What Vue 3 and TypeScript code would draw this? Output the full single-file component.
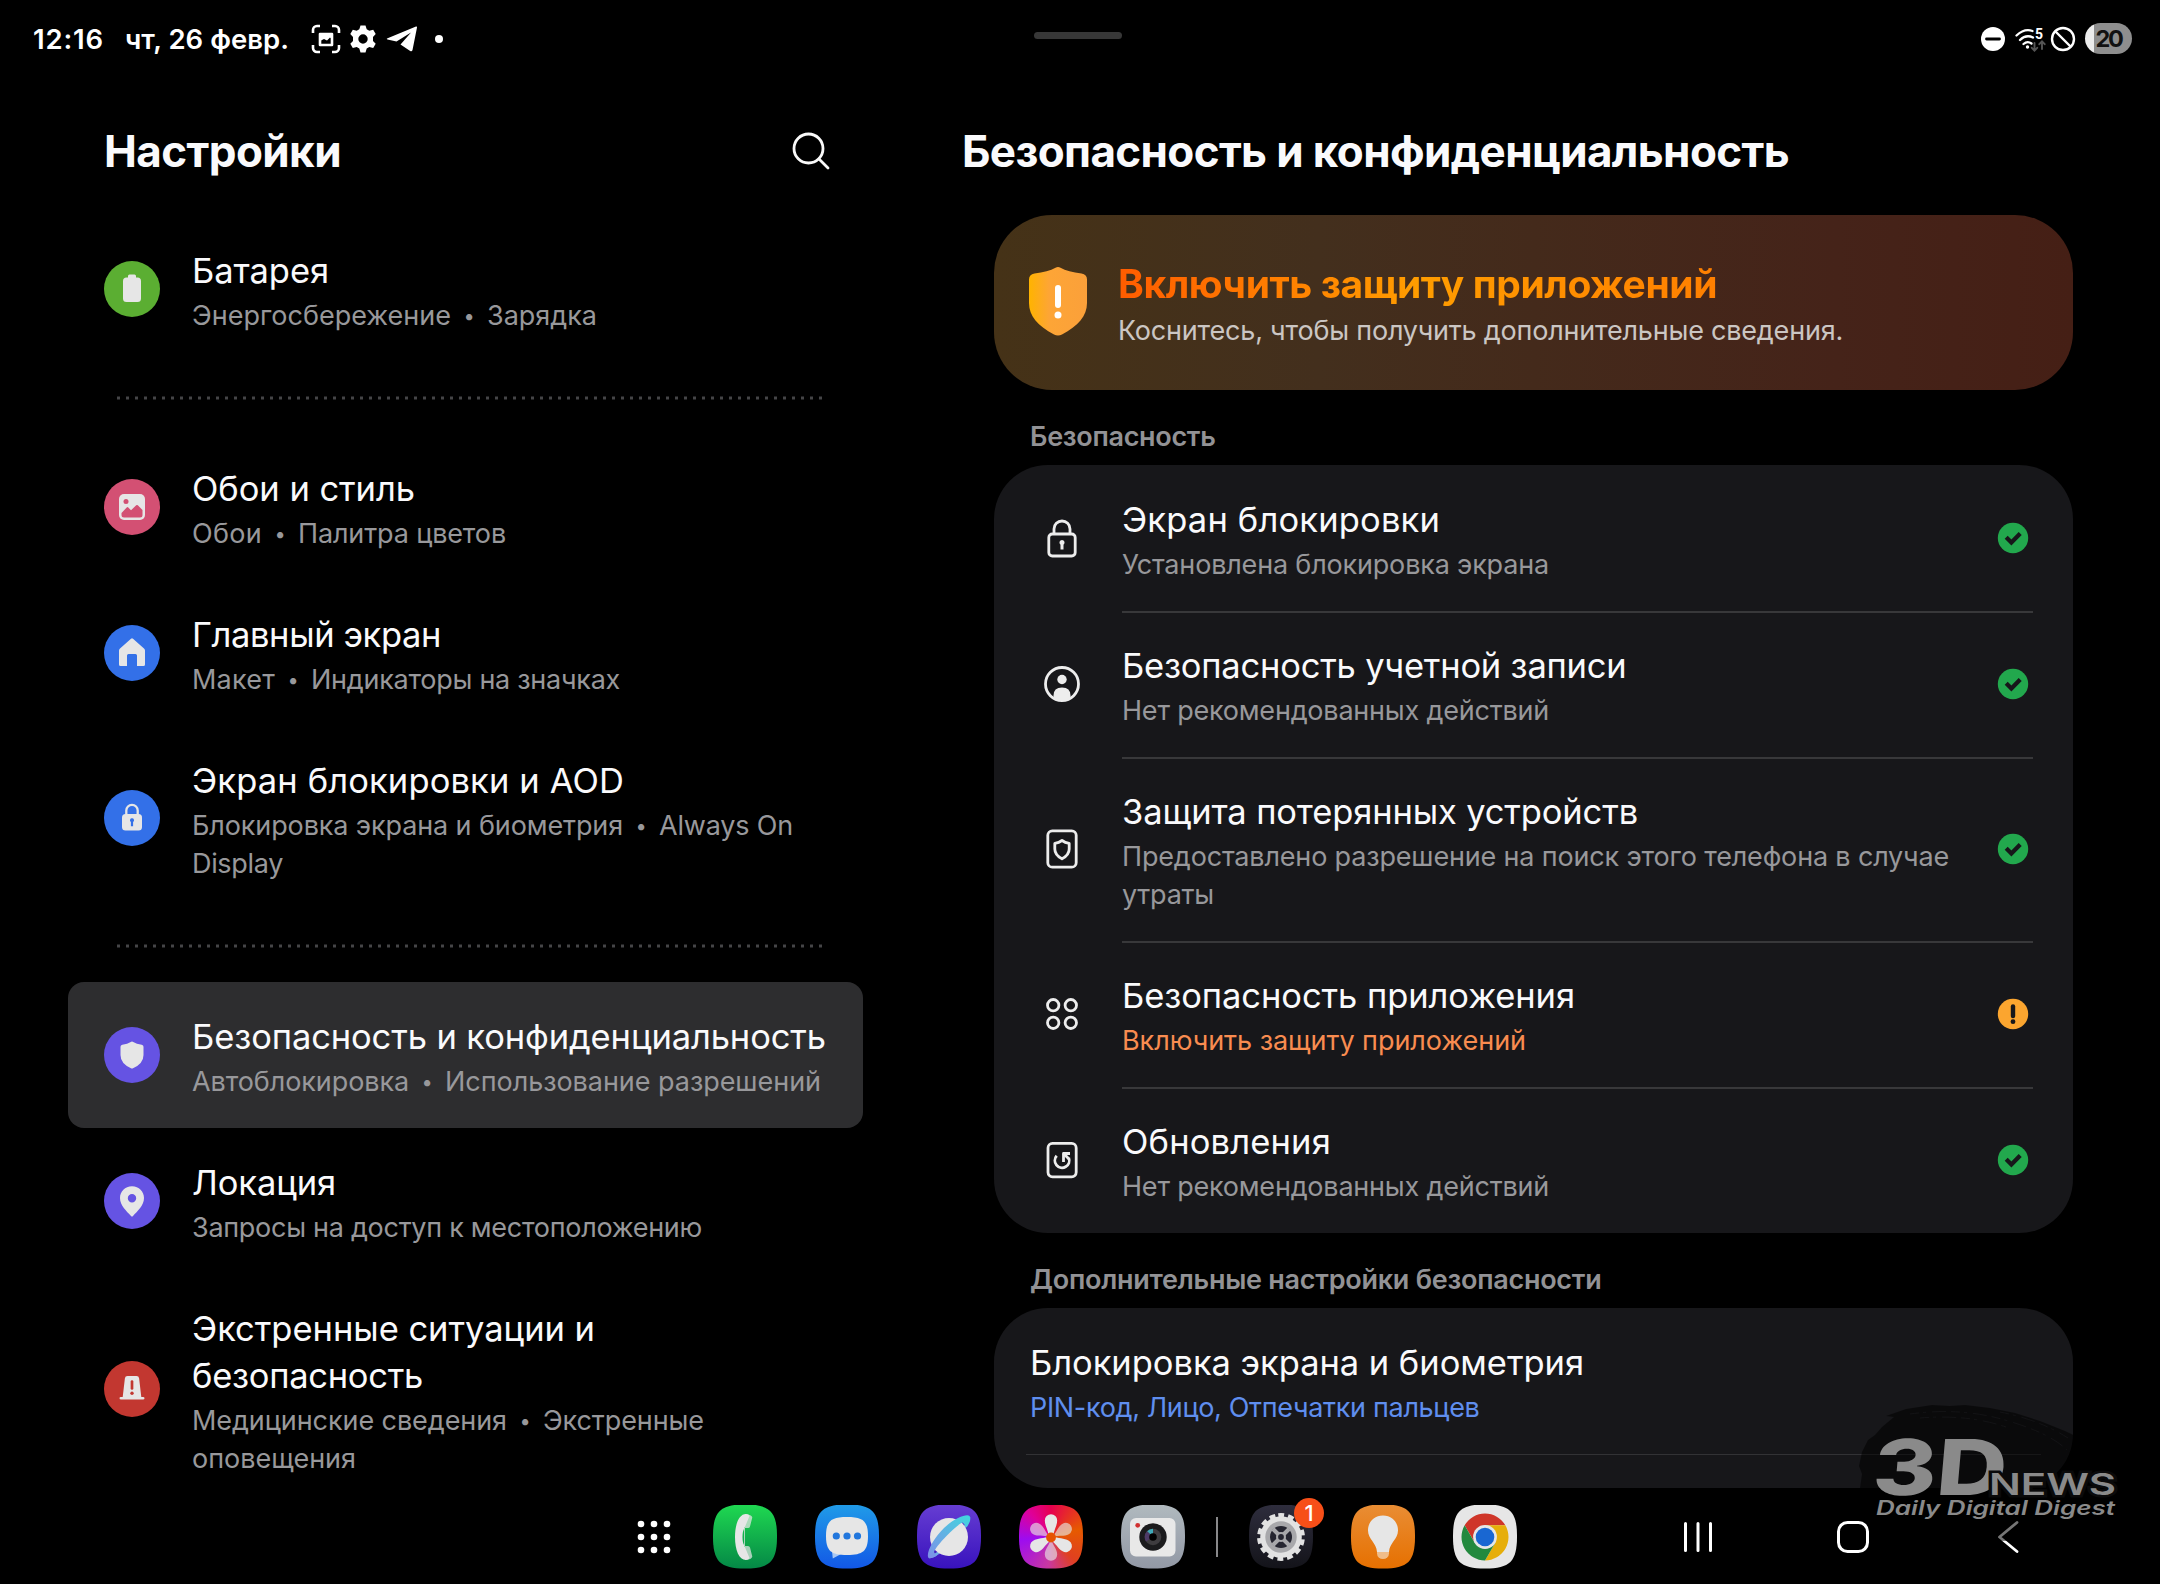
<script setup lang="ts">
import type { Directive } from 'vue'

interface Part { t: string; w: number }
interface MenuItem { icon: string; color: string; title: Part[]; sub: Part[][]; active?: boolean }
interface SecurityRow { icon: string; title: Part; sub: Part[]; warn?: boolean }

// Tracks a run of text so that it takes exactly the given advance width.
const vFit: Directive<HTMLElement, number> = {
  mounted(el, { value }) {
    const natural = el.getBoundingClientRect().width
    const count = (el.textContent ?? '').length
    if (count > 0) el.style.letterSpacing = `${(value - natural) / count}px`
  },
}

const groups: MenuItem[][] = [
  [
    { icon: 'battery', color: '#5bae32', title: [{ t: 'Батарея', w: 137 }], sub: [[{ t: 'Энергосбережение', w: 259 }, { t: 'Зарядка', w: 110 }]] },
  ],
  [
    { icon: 'picture', color: '#d35073', title: [{ t: 'Обои и стиль', w: 223 }], sub: [[{ t: 'Обои', w: 70 }, { t: 'Палитра цветов', w: 208 }]] },
    { icon: 'home', color: '#3370e8', title: [{ t: 'Главный экран', w: 249 }], sub: [[{ t: 'Макет', w: 83 }, { t: 'Индикаторы на значках', w: 309 }]] },
    { icon: 'lock', color: '#3370e8', title: [{ t: 'Экран блокировки и AOD', w: 432 }], sub: [[{ t: 'Блокировка экрана и биометрия', w: 431 }, { t: 'Always On', w: 134 }], [{ t: 'Display', w: 91 }]] },
  ],
  [
    { icon: 'shield', color: '#6553e3', active: true, title: [{ t: 'Безопасность и конфиденциальность', w: 634 }], sub: [[{ t: 'Автоблокировка', w: 217 }, { t: 'Использование разрешений', w: 376 }]] },
    { icon: 'pin', color: '#6553e3', title: [{ t: 'Локация', w: 144 }], sub: [[{ t: 'Запросы на доступ к местоположению', w: 510 }]] },
    { icon: 'siren', color: '#c23730', title: [{ t: 'Экстренные ситуации и', w: 403 }, { t: 'безопасность', w: 231 }], sub: [[{ t: 'Медицинские сведения', w: 315 }, { t: 'Экстренные', w: 161 }], [{ t: 'оповещения', w: 164 }]] },
  ],
]

const rows: SecurityRow[] = [
  { icon: 'lock', title: { t: 'Экран блокировки', w: 318 }, sub: [{ t: 'Установлена блокировка экрана', w: 427 }] },
  { icon: 'person', title: { t: 'Безопасность учетной записи', w: 504.5 }, sub: [{ t: 'Нет рекомендованных действий', w: 427 }] },
  { icon: 'device', title: { t: 'Защита потерянных устройств', w: 516 }, sub: [{ t: 'Предоставлено разрешение на поиск этого телефона в случае', w: 827 }, { t: 'утраты', w: 92 }] },
  { icon: 'apps', title: { t: 'Безопасность приложения', w: 453 }, sub: [{ t: 'Включить защиту приложений', w: 404 }], warn: true },
  { icon: 'update', title: { t: 'Обновления', w: 209 }, sub: [{ t: 'Нет рекомендованных действий', w: 427 }] },
]

const petals = [0, 120, 240]
const gridDots = [0, 1, 2, 3, 4, 5, 6, 7, 8]
</script>

<template>
  <div class="screen">
    <header class="status">
      <div class="status-left">
        <span v-fit="71" class="clock">12:16</span>
        <span v-fit="164" class="date">чт, 26 февр.</span>
        <svg class="s-shot" width="30" height="30" viewBox="0 0 30 30" fill="none" stroke="#fff" stroke-width="2.6">
          <path d="M2 9V6a4 4 0 0 1 4-4h3M21 2h3a4 4 0 0 1 4 4v3M28 21v3a4 4 0 0 1-4 4h-3M9 28H6a4 4 0 0 1-4-4v-3" />
          <path d="M9 10h12v11H9z" stroke-width="2.6" stroke-linejoin="round" />
          <path d="M9 17l4-2 3 1.500 3-3 2 1.500V9H9z" fill="#fff" stroke="none" />
        </svg>
        <svg class="s-gear" width="28" height="28" viewBox="0 0 28 28" fill="#fff">
          <path fill-rule="evenodd" d="M11.500 0.500h5l1.200 3.800 2.600 1.500 3.900-1 2.500 4.300-2.700 2.900v3.900l2.700 2.900-2.500 4.300-3.900-1-2.600 1.500-1.200 3.900h-5l-1.200-3.900-2.600-1.500-3.900 1-2.500-4.300L4 15.900V12L1.300 9.100l2.500-4.300 3.900 1 2.600-1.500zM14 9.300a4.700 4.700 0 1 0 0 9.400a4.700 4.700 0 1 0 0-9.400z" />
        </svg>
        <svg class="s-tg" width="32" height="28" viewBox="0 0 32 28" fill="#fff">
          <path d="M1 13.500L30 1.500q1.200-.3 1 1L26.500 25q-.6 2-2.300 1L14.500 19.500L25 7.500L10.500 16.500L1.500 14.500q-1.200-.4-.5-1z" />
        </svg>
        <i class="s-dot"></i>
      </div>
      <div class="handle"></div>
      <div class="status-right">
        <svg width="26" height="26" viewBox="0 0 26 26"><circle cx="13" cy="13" r="12" fill="#fff" /><path d="M6.500 13h13" stroke="#000" stroke-width="2.800" stroke-linecap="round" /></svg>
        <svg class="s-wifi" width="32" height="32" viewBox="0 -4 32 32" fill="none" stroke="#fff" stroke-width="2.300" stroke-linecap="round">
          <path d="M1.500 8.500Q9.500 1 17.500 4M5 13Q11 7 18 10.500M8.500 17Q12.500 13.500 16.500 16.500" />
          <circle cx="12.500" cy="20" r="1.700" fill="#fff" stroke="none" />
          <path d="M19.500 16v7.500m-2.700-2.700l2.700 2.900 2.700-2.900M27 22v-7.500m-2.700 2.700l2.700-2.900 2.700 2.900" stroke="#555" stroke-width="1.900" />
          <text x="20" y="12" class="wifi-five">5</text>
        </svg>
        <svg class="s-no" width="26" height="26" viewBox="0 0 26 26" fill="none" stroke="#fff" stroke-width="2.400"><circle cx="13" cy="13" r="11" /><path d="M5.500 5.500l15 15" /></svg>
        <div class="battery-pill"><b v-fit="26">20</b></div>
      </div>
    </header>

    <main class="panes">
      <nav class="sidebar">
        <div class="side-head">
          <h1 v-fit="237">Настройки</h1>
          <svg width="40" height="40" viewBox="0 0 40 40" fill="none" stroke="#fafafa" stroke-width="2.800" stroke-linecap="round"><circle cx="17.500" cy="17.500" r="14.500" /><path d="M28 28l9 9" /></svg>
        </div>
        <div class="list">
          <section v-for="(group, g) in groups" :key="g" class="group">
            <svg v-if="g > 0" class="dots" width="706" height="72" viewBox="0 0 706 72"><path d="M0 36H706" stroke="#454547" stroke-width="3" stroke-dasharray="3 6" /></svg>
            <a v-for="item in group" :key="item.icon" class="item" :class="{ active: item.active }">
              <svg class="disc" width="56" height="56" viewBox="0 0 56 56" fill="#e6e6e6">
                <circle cx="28" cy="28" r="28" :fill="item.color" />
                <path v-if="item.icon === 'battery'" d="M24 16.500v-1.500a1.500 1.500 0 0 1 1.500-1.500h5a1.500 1.500 0 0 1 1.500 1.500v1.500h1.500a3.500 3.500 0 0 1 3.500 3.500v17.500a3.500 3.500 0 0 1-3.500 3.500h-11a3.500 3.500 0 0 1-3.500-3.500V20a3.500 3.500 0 0 1 3.500-3.500z" />
                <g v-else-if="item.icon === 'picture'">
                  <rect x="15" y="15" width="26" height="26" rx="5" />
                  <circle cx="22" cy="22.500" r="2.500" :fill="item.color" />
                  <path :fill="item.color" d="M17.500 36v-2l5.200-5.500q.8-.8 1.600 0l2.700 2.800 5.200-5q.8-.8 1.600 0l4.700 4.700V36q0 2.500-2.500 2.500H20q-2.500 0-2.500-2.500z" />
                </g>
                <path v-else-if="item.icon === 'home'" d="M27 13.800q1-.9 2 0L40 23.500q1 .9 1 2V39.500q0 1.500-1.500 1.500H33V30.500q0-1.500-1.500-1.500h-7q-1.500 0-1.500 1.500V41h-6.500q-1.500 0-1.500-1.500V25.500q0-1.100 1-2z" />
                <g v-else-if="item.icon === 'lock'">
                  <path d="M22.300 25v-4.500a5.700 5.700 0 0 1 11.400 0V25" fill="none" stroke="#e6e6e6" stroke-width="2.300" />
                  <rect x="18" y="24" width="20" height="16.500" rx="3.500" />
                  <path :fill="item.color" d="M28 28.300a2 2 0 0 1 1.100 3.700v4.200h-2.200V32a2 2 0 0 1 1.100-3.700z" />
                </g>
                <path v-else-if="item.icon === 'shield'" d="M27.300 14.700q.7-.4 1.400 0 4 2.300 9 3 1.800.3 1.800 2V28q0 8.500-10.500 13.300-1 .5-2 0Q16.500 36.500 16.500 28v-8.300q0-1.700 1.800-2 5-.7 9-3z" />
                <path v-else-if="item.icon === 'pin'" fill-rule="evenodd" d="M28 13.300c7 0 12 5.200 12 11.700 0 7.500-6.500 13-11 18q-1 1-2 0c-4.500-5-11-10.500-11-18 0-6.500 5-11.700 12-11.700zM28 21a4.200 4.200 0 1 0 0 8.400a4.200 4.200 0 1 0 0-8.400z" />
                <g v-else>
                  <path d="M23.500 15h9q2.300 0 2.600 2.300L37.300 36h1.700q1.500 0 1.500 1.200T39 38.500H17q-1.500 0-1.500-1.300T17 36h1.700l2.200-18.700Q21.200 15 23.500 15z" />
                  <path d="M28 20.500v7" :stroke="item.color" stroke-width="2.700" stroke-linecap="round" /><circle cx="28" cy="32.300" r="1.700" :fill="item.color" />
                </g>
              </svg>
              <div class="texts">
                <div v-for="line in item.title" :key="line.t" class="title"><span v-fit="line.w">{{ line.t }}</span></div>
                <div class="subs">
                  <div v-for="(line, l) in item.sub" :key="l" class="sub">
                    <template v-for="(part, p) in line" :key="p"><span v-if="p > 0" class="bullet">•</span><span v-fit="part.w">{{ part.t }}</span></template>
                  </div>
                </div>
              </div>
            </a>
          </section>
        </div>
      </nav>

      <section class="detail">
        <div class="detail-head"><h1 v-fit="827">Безопасность и конфиденциальность</h1></div>
        <div class="detail-body">
          <div class="banner">
            <svg width="60" height="70" viewBox="0 0 60 70">
              <defs><linearGradient id="amber"><stop offset="0" stop-color="#ffb300" /><stop offset=".35" stop-color="#fda536" /><stop offset="1" stop-color="#fba03a" /></linearGradient></defs>
              <path fill="url(#amber)" d="M27.500 1.800q2.500-1.600 5 0Q40 6 53.500 7.500q5.500.8 5.500 6V37c0 13-9 23-25 31.500q-4 2-8 0C10 60 1 50 1 37V13.500q0-5.200 5.500-6Q20 6 27.500 1.800z" />
              <path d="M30 22v17" stroke="#fff" stroke-width="6" stroke-linecap="round" /><circle cx="30" cy="49" r="3.500" fill="#fff" />
            </svg>
            <div>
              <div class="banner-title"><span v-fit="599">Включить защиту приложений</span></div>
              <div class="banner-sub"><span v-fit="725">Коснитесь, чтобы получить дополнительные сведения.</span></div>
            </div>
          </div>

          <h2><span v-fit="185.5">Безопасность</span></h2>
          <div class="card">
            <div v-for="row in rows" :key="row.icon" class="row">
              <svg class="row-icon" width="40" height="44" viewBox="0 0 40 44" fill="none" stroke="#ededed" stroke-width="2.800">
                <g v-if="row.icon === 'lock'">
                  <path d="M12 18v-5a8 8 0 0 1 16 0v5" /><rect x="6.800" y="18" width="26.400" height="22" rx="3.500" />
                  <path d="M20 24a2.600 2.600 0 0 1 1.500 4.700v4.800h-3v-4.800A2.600 2.600 0 0 1 20 24z" fill="#ededed" stroke="none" />
                </g>
                <g v-else-if="row.icon === 'person'">
                  <circle cx="20" cy="22" r="16.500" /><circle cx="20" cy="17.500" r="4.700" fill="#ededed" stroke="none" />
                  <path d="M11.500 36v-2.500q0-8 8.500-8t8.500 8V36q-8.500 4-17 0z" fill="#ededed" stroke="none" />
                </g>
                <g v-else-if="row.icon === 'device'">
                  <rect x="5.800" y="3.800" width="28.400" height="36.400" rx="4.500" />
                  <path d="M20 13.500q3 2.200 7.200 2.900V22q0 6-7.200 9.800-7.200-3.800-7.200-9.800v-5.600Q17 15.700 20 13.500z" stroke-linejoin="round" />
                </g>
                <g v-else-if="row.icon === 'apps'">
                  <circle cx="11.200" cy="13.200" r="5.700" /><circle cx="28.800" cy="13.200" r="5.700" /><circle cx="11.200" cy="30.800" r="5.700" /><circle cx="28.800" cy="30.800" r="5.700" />
                </g>
                <g v-else>
                  <rect x="6" y="5.400" width="28.200" height="33.400" rx="4.500" />
                  <path d="M14.700 17.800A7.200 7.200 0 1 0 26.800 20" /><path d="M28 15.500H21.500V24" stroke-linejoin="round" /><path d="M21.500 15.500L27 21" />
                </g>
              </svg>
              <div class="row-main">
                <div class="texts">
                  <div class="title"><span v-fit="row.title.w">{{ row.title.t }}</span></div>
                  <div class="subs">
                    <div v-for="line in row.sub" :key="line.t" class="sub" :class="{ warn: row.warn }"><span v-fit="line.w">{{ line.t }}</span></div>
                  </div>
                </div>
                <svg class="state" width="32" height="32" viewBox="0 0 32 32">
                  <template v-if="row.warn">
                    <circle cx="16" cy="16" r="15.200" fill="#fba52f" /><path d="M16 8.500v9.500" stroke="#17171a" stroke-width="4.400" stroke-linecap="round" /><circle cx="16" cy="23.700" r="2.400" fill="#17171a" />
                  </template>
                  <template v-else>
                    <circle cx="16" cy="16" r="15.200" fill="#22a84d" /><path d="M9.200 15.200l5.200 5.200 8.800-8.800" fill="none" stroke="#17171a" stroke-width="4.300" />
                  </template>
                </svg>
              </div>
            </div>
          </div>

          <h2><span v-fit="571.5">Дополнительные настройки безопасности</span></h2>
          <div class="card tail">
            <div class="title"><span v-fit="554">Блокировка экрана и биометрия</span></div>
            <div class="subs"><div class="sub link"><span v-fit="449.5">PIN-код, Лицо, Отпечатки пальцев</span></div></div>
            <div class="thin"></div>
          </div>
        </div>
      </section>
    </main>

    <footer class="taskbar">
      <div class="dock">
        <svg class="launcher" width="34" height="34" viewBox="0 0 34 34" fill="#fff">
          <circle v-for="d in gridDots" :key="d" :cx="4 + (d % 3) * 13" :cy="4 + Math.floor(d / 3) * 13" r="3.300" />
        </svg>
        <div class="app phone">
          <svg viewBox="0 0 64 64"><path d="M32 9q7 .5 7.300 3.500L37 21.500q-.4 1.500-2 1.500h-4V41h4q1.600 0 2 1.500L39.300 51.500Q39 54.500 32 55z" fill="#e6e6e6" opacity=".72" /><path d="M33 9C26 9 22 19 22 32s4 23 11 23q2.800 0 3.500-2L31.500 41Q29.500 38 29.500 32t2-9L36.500 11Q35.800 9 33 9z" fill="#e6e6e6" /></svg>
        </div>
        <div class="app messages">
          <svg viewBox="0 0 64 64"><path d="M17 46l.8 7.500L26 49z" fill="#a9c8f3" /><path d="M32 12c16 0 21 4 21 19s-5 19-21 19-21-4-21-19 5-19 21-19z" fill="#e6e6e6" /><g fill="#2277dd"><circle cx="21.300" cy="31" r="3.600" /><circle cx="32" cy="31" r="3.600" /><circle cx="42.500" cy="31" r="3.600" /></g></svg>
        </div>
        <div class="app internet">
          <svg viewBox="0 0 64 64">
            <defs><linearGradient id="ring" x1="0" y1="1" x2="1" y2="0"><stop offset="0" stop-color="#7f8fe8" /><stop offset="1" stop-color="#3fd8de" /></linearGradient></defs>
            <path d="M12 52C20 53 52 22 52 12" fill="none" stroke="#6fa8e6" stroke-width="2.500" />
            <circle cx="32" cy="32" r="19" fill="#e6e6e6" />
            <path d="M20 50.500C16 53 12 54 11.200 52.500 9 47 17 33 27 23 38 12.500 50 8.500 52.500 11 54.500 14 52.500 18.500 49.500 22.500 48.500 20.500 47 18.500 45.500 17.500 42 19 36 24.500 29.500 31 23 37.500 18 44 17 47 17.500 48.500 19 50 20 50.500z" fill="url(#ring)" />
          </svg>
        </div>
        <div class="app gallery">
          <svg viewBox="0 0 64 64" fill="#e6e6e6">
            <path v-for="a in petals" :key="'f' + a" :transform="`rotate(${a + 60} 32 32.500)`" opacity=".64" d="M32 31C30 24 25.800 21 25.800 15.500a6.200 6.200 0 0 1 12.400 0C38.200 21 34 24 32 31z" />
            <path v-for="a in petals" :key="'s' + a" :transform="`rotate(${a} 32 32.500)`" d="M30 33C29.500 25 25.800 21 25.800 15.500a6.200 6.200 0 0 1 12.400 0C38.200 21 34.500 25 34 33z" />
            <circle cx="32" cy="32.500" r="4.900" fill="#e65300" />
          </svg>
        </div>
        <div class="app camera">
          <svg viewBox="0 0 64 64"><rect x="9" y="13" width="45.500" height="38.500" rx="6" fill="#e8e8e8" /><circle cx="16.700" cy="20.300" r="2.400" fill="#d03030" /><circle cx="32" cy="32" r="13.700" fill="#1b1b1d" /><circle cx="32" cy="32" r="8.300" fill="#3e3c3f" /><path d="M32 23.700a8.300 8.300 0 0 0-6 2.500l6 5.800z" fill="#3fa9b8" /><path d="M26 26.200a8.300 8.300 0 0 0-1 10.300l7-4.500z" fill="#4d3a66" /><circle cx="32" cy="32" r="3.800" fill="#000" /></svg>
        </div>
        <i class="divider"></i>
        <div class="app-wrap">
          <div class="app settings">
            <svg viewBox="0 0 64 64">
              <circle cx="32" cy="32" r="20.800" fill="#e2e2e2" /><circle cx="32" cy="32" r="21.800" fill="none" stroke="#e2e2e2" stroke-width="4.200" stroke-dasharray="5.800 3.984" transform="rotate(-97 32 32)" />
              <circle cx="32" cy="32" r="15.700" fill="#a8a8ab" /><circle cx="32" cy="32" r="11" fill="#252530" />
              <path d="M24 24l16 16M40 24L24 40" stroke="#a8a8ab" stroke-width="4" /><circle cx="32" cy="32" r="5" fill="#a8a8ab" /><circle cx="32" cy="32" r="2.900" fill="#252530" />
            </svg>
          </div>
          <b class="badge">1</b>
        </div>
        <div class="app bulb">
          <svg viewBox="0 0 64 64"><path d="M26 46h12v2.500a6 5.500 0 0 1-12 0z" fill="#f0bd8a" /><path d="M32 10.500c9 0 15 6.500 15 15 0 9-8.500 12-9 21.500H26C25.500 37.500 17 34.500 17 25.500c0-8.500 6-15 15-15z" fill="#e6e6e6" /></svg>
        </div>
        <div class="app chrome">
          <svg viewBox="0 0 64 64">
            <g transform="translate(32 32)">
              <path d="M-20.350-11.750A23.500 23.500 0 0 1 20.350-11.750H0L-10.180 5.870z" fill="#cf3629" />
              <path transform="rotate(120)" d="M-20.350-11.750A23.500 23.500 0 0 1 20.350-11.750H0L-10.180 5.870z" fill="#e6ae0a" />
              <path transform="rotate(240)" d="M-20.350-11.750A23.500 23.500 0 0 1 20.350-11.750H0L-10.180 5.870z" fill="#23893e" />
              <circle r="11.900" fill="#e6e6e6" /><circle r="9.300" fill="#1967d2" />
            </g>
          </svg>
        </div>
      </div>
      <div class="sysnav">
        <svg width="30" height="32" viewBox="0 0 30 32" stroke="#fff" stroke-width="3" stroke-linecap="round"><path d="M2.500 2.500v27M15 2.500v27M27.500 2.500v27" /></svg>
        <svg width="34" height="34" viewBox="0 0 34 34" fill="none" stroke="#fff" stroke-width="3"><rect x="2.500" y="2.500" width="29" height="29" rx="9" /></svg>
        <svg class="back" width="24" height="34" viewBox="0 0 24 34" fill="none" stroke="#fff" stroke-width="2.800" stroke-linecap="round" stroke-linejoin="round"><path d="M21 2.500L3.500 17L21 31.500" /></svg>
      </div>
    </footer>

    <svg class="watermark" width="310" height="184" viewBox="0 0 310 184">
      <path fill="#000" opacity=".54" d="M10 88L12 74 9 66 12 52 18 40 25 35 32 27 44 17 36 16 56 9 82 5 100 6 115 5 140 8 165 13 190 21 215 31 240 43 262 58 280 74 296 92 300 110 280 128 250 138 200 134 160 141 100 140 40 128 18 110 11 98z" />
      <path fill="none" stroke="#17171a" stroke-width="1" opacity=".7" stroke-dasharray="9 4 3 6 14 5" d="M60 14q50-7 95 6t62 30M70 18q48-4 86 9M150 12q40 8 68 26" />
      <g class="mark">
        <text x="21" y="95" class="wm-big" textLength="134" lengthAdjust="spacingAndGlyphs" transform="translate(8.300 0) skewX(-5)">3D</text>
        <text x="139" y="95" class="wm-news" textLength="127" lengthAdjust="spacingAndGlyphs">NEWS</text>
        <text x="26" y="114.500" class="wm-tag" textLength="239" lengthAdjust="spacingAndGlyphs">Daily Digital Digest</text>
      </g>
    </svg>
  </div>
</template>

<style>
html, body { margin: 0; background: #000; overflow: hidden; }
</style>

<style scoped>
.screen { position: relative; width: 2160px; height: 1584px; overflow: hidden; display: flex; flex-direction: column; background: #000; color: #fafafc; font-family: Inter, Roboto, "Noto Sans", sans-serif; }
svg { display: block; flex: none; }
h1, h2 { margin: 0; }
span, h1, b { white-space: nowrap; }

.status { height: 76px; box-sizing: border-box; padding: 2px 28px 0 32px; display: grid; grid-template-columns: 1002px 88px 1fr; align-items: center; }
.status-left, .status-right { display: flex; align-items: center; }
.status-left { font-size: 27.500px; font-weight: 600; color: #fff; padding-left: 1px; }
.date { margin-left: 21px; }
.s-shot { margin-left: 22px; }
.s-gear { margin-left: 8px; }
.s-tg { margin-left: 9px; }
.s-dot { width: 8px; height: 8px; border-radius: 50%; background: #fff; margin-left: 17px; }
.handle { height: 7px; border-radius: 4px; background: #373737; margin-top: -8px; }
.status-right { justify-content: flex-end; margin-top: -1px; }
.s-wifi { margin-left: 9px; }
.wifi-five { font: 700 14px Roboto, sans-serif; fill: #fff; stroke: none; }
.s-no { margin-left: 3px; }
.battery-pill { margin-left: 9px; width: 47px; height: 31px; border-radius: 16px; background: linear-gradient(90deg, #ececec 9px, #8e8e8e 9px); color: #111; font-size: 23.500px; display: flex; align-items: center; justify-content: center; }

.panes { flex: 1; min-height: 0; display: flex; overflow: hidden; }
.sidebar { width: 863px; padding-left: 68px; box-sizing: border-box; flex: none; }
.side-head, .detail-head { height: 139px; box-sizing: border-box; padding-top: 11px; display: flex; align-items: center; }
.side-head { padding-left: 36px; padding-right: 32px; justify-content: space-between; }
h1 { font-size: 44px; line-height: 60px; font-weight: 700; }
.list { padding-top: 1px; }
.dots { margin-left: 49px; }
.item { display: flex; align-items: center; padding: 30.500px 0 27.500px 36px; border-radius: 16px; }
.item.active { background: #2d2d2f; }
.texts { flex: 1; }
.disc { margin: -4px 32px 0 0; }
.title { font-size: 34.500px; line-height: 47px; }
.subs { margin-top: 3px; }
.sub { font-size: 27px; line-height: 38px; color: #98989b; display: flex; }
.bullet { width: 36px; text-align: center; font-size: 20px; }

.detail { flex: 1; padding-left: 131px; }
.detail-head { margin-left: -32px; }
.detail-body { width: 1079px; }
.banner { height: 175px; border-radius: 58px; box-sizing: border-box; padding-left: 34px; display: flex; align-items: center; gap: 30px; background: linear-gradient(90deg, #453217 0%, #432f1d 30%, #442a1b 50%, #452319 78%, #451f15 100%); }
.banner svg { margin-top: -3px; }
.banner-title { font-size: 39px; line-height: 52px; font-weight: 700; margin-top: 1px; }
.banner-title span { display: inline-block; color: transparent; background: linear-gradient(90deg, #ff5c00 0%, #ff9d00 50%, #ff7f00 100%); background-clip: text; -webkit-background-clip: text; }
.banner-sub { font-size: 27px; line-height: 38px; color: #cbc6c3; position: relative; top: 2px; }
h2 { height: 75px; box-sizing: border-box; padding: 27.500px 0 0 36px; font-size: 27px; line-height: 38px; font-weight: 600; color: #929295; }
.card { border-radius: 54px; background: #17171a; overflow: hidden; }
.row { display: flex; align-items: center; padding-left: 48px; padding-right: 40px; }
.row-icon { margin-right: 40px; }
.row-main { flex: 1; display: flex; align-items: center; padding: 30.500px 4px 27.500px 0; }
.state { margin-top: -4px; }
.row + .row .row-main { box-shadow: inset 0 2px #38383a; }
.warn { color: #f98c50; }
.link { color: #5f8eee; }
.tail { height: 180px; box-sizing: border-box; padding: 30.500px 32px 0 36px; }
.thin { height: 1px; background: #323235; margin: 27px 0 0 -4px; }

.taskbar { height: 96px; flex: none; display: flex; justify-content: space-between; box-sizing: border-box; padding: 1px 140px 0 637px; align-items: center; }
.dock { display: flex; align-items: center; }
.launcher { margin-right: 4px; }
.app { width: 64px; height: 64px; margin-left: 38px; clip-path: path("M32 0C7 0 0 7 0 32S7 64 32 64 64 57 64 32 57 0 32 0Z"); }
.app svg { width: 64px; height: 64px; }
.phone { background: linear-gradient(#1fd851, #048746); }
.messages { background: linear-gradient(#209be8, #1257e6); }
.internet { background: linear-gradient(#663dd2, #3812bd); }
.gallery { background: conic-gradient(#e6004f 0deg, #e65a00 75deg, #e04020 135deg, #c938a0 185deg, #9d0cf0 265deg, #df0098 320deg, #e6004f 360deg); }
.camera { background: linear-gradient(#b0b9be, #9298a5); }
.settings { background: linear-gradient(#2e2d3d, #131319); margin-left: 0; }
.bulb { background: linear-gradient(#e98d34, #e67000); }
.chrome { background: #e6e6e6; }
.divider { width: 2px; height: 40px; background: #88888a; margin: 0 31px; }
.app-wrap { position: relative; }
.badge { position: absolute; right: -11px; top: -7px; width: 30px; height: 30px; border-radius: 50%; background: #f74f18; color: #fff; font-size: 22px; line-height: 30px; font-weight: 500; text-align: center; }
.sysnav { display: flex; align-items: center; gap: 126px; }
.sysnav svg:first-child { margin-right: -3px; }

.watermark { position: absolute; left: 1850px; top: 1400px; }
.mark { fill: #8a8a8a; font-family: Inter, "Liberation Sans", sans-serif; }
.wm-big { font-size: 77px; font-weight: 800; }
.wm-news { font-size: 30px; font-weight: 600; stroke: #0a0a0b; stroke-width: 5px; paint-order: stroke; }
.wm-tag { font-size: 19.500px; font-weight: 600; font-style: italic; }
</style>
